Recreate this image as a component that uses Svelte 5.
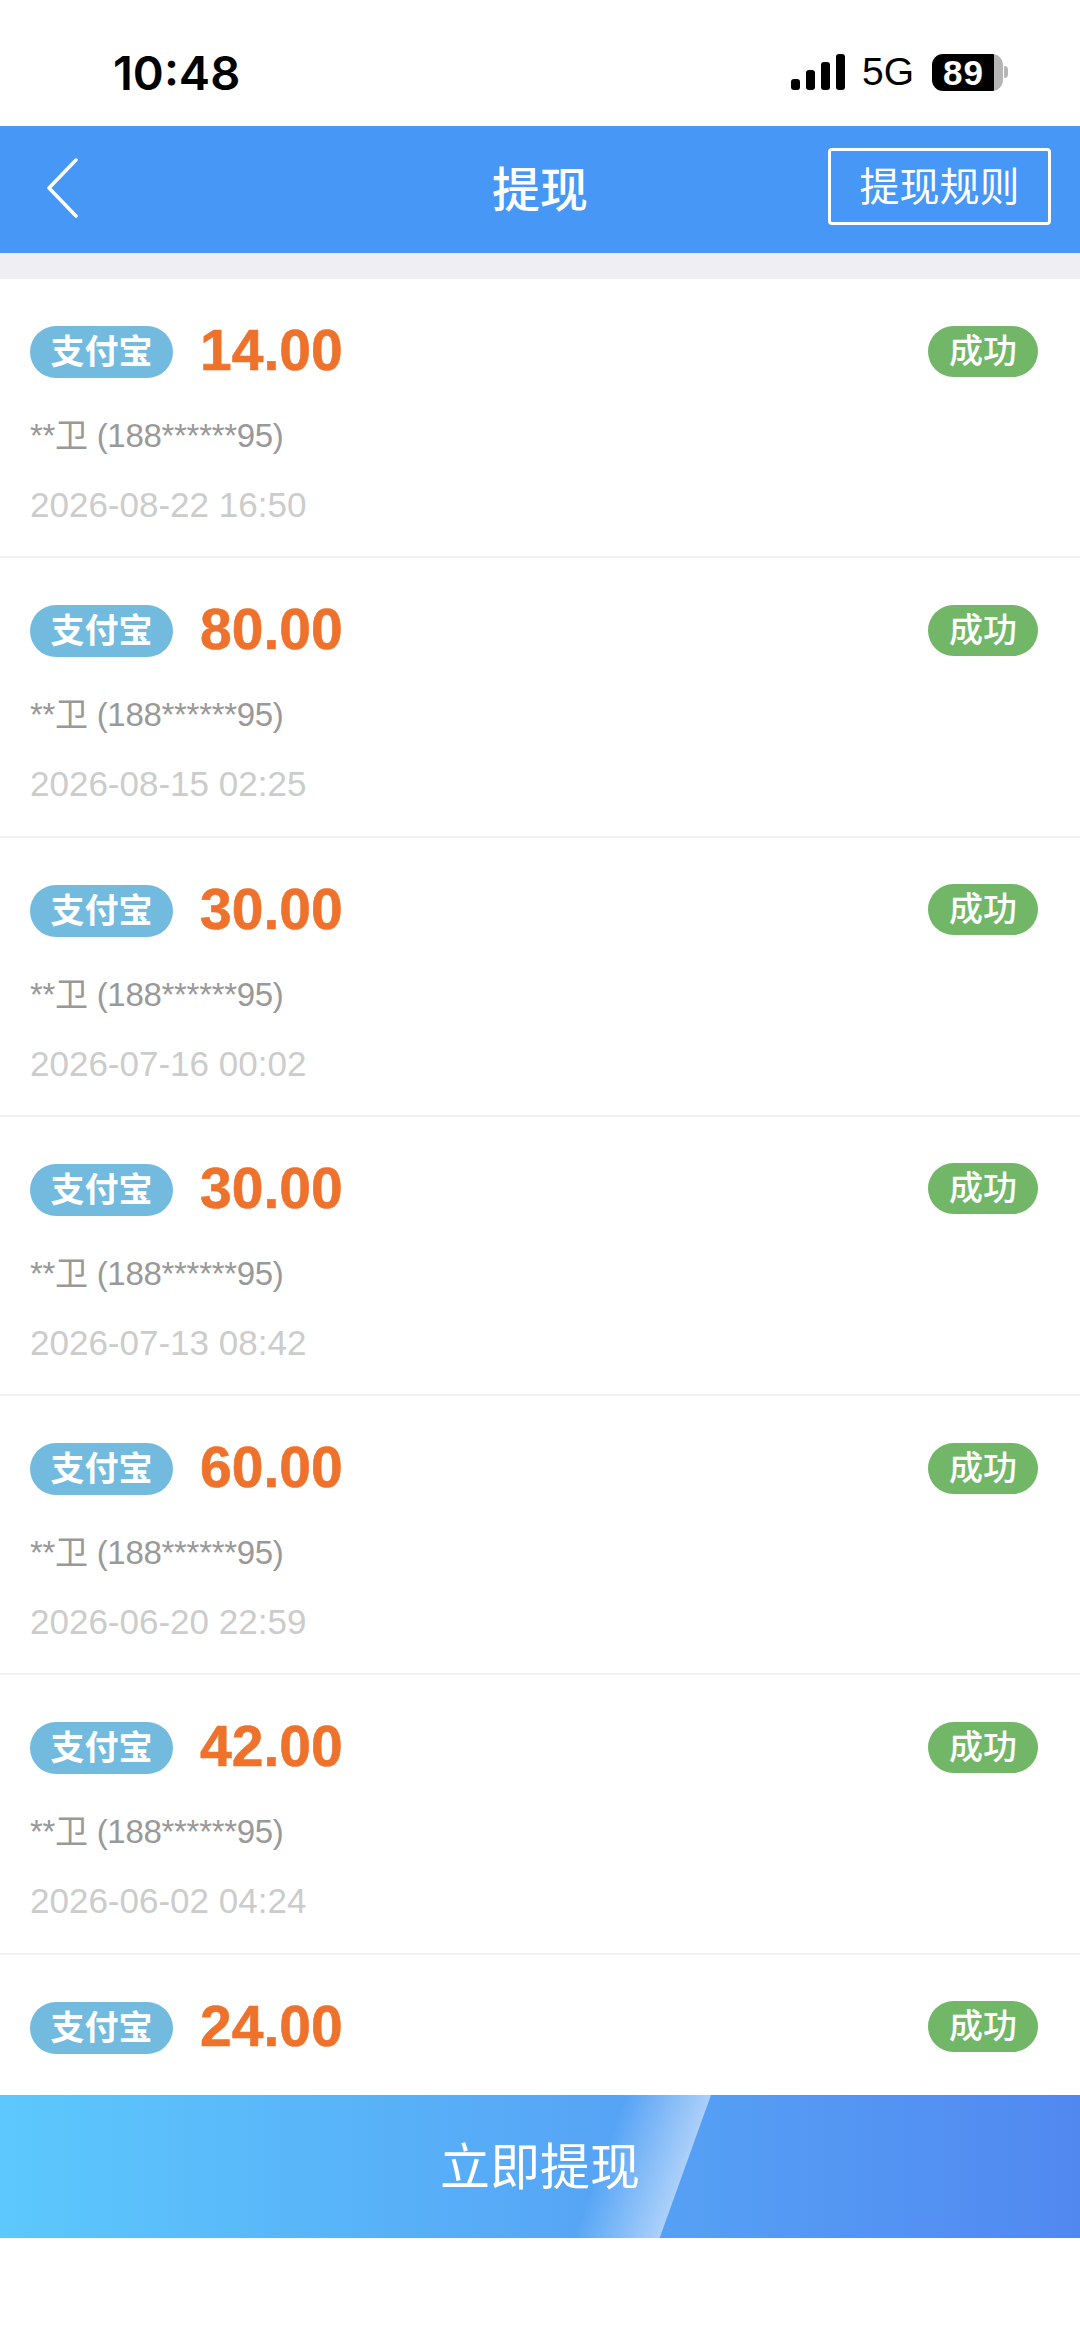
<script>
    const records = [
        { amount: "14.00", time: "2026-08-22 16:50" },
        { amount: "80.00", time: "2026-08-15 02:25" },
        { amount: "30.00", time: "2026-07-16 00:02" },
        { amount: "30.00", time: "2026-07-13 08:42" },
        { amount: "60.00", time: "2026-06-20 22:59" },
        { amount: "42.00", time: "2026-06-02 04:24" },
        { amount: "24.00", time: "" }
    ];
</script>

<div class="page">
    <div class="statusbar">
        <span class="clock">10:48</span>
        <div class="status-right">
            <svg class="signal" width="54" height="36" viewBox="0 0 54 36">
                <rect x="0" y="25" width="9" height="11" rx="3" />
                <rect x="15" y="16" width="9" height="20" rx="3" />
                <rect x="30" y="8" width="9" height="28" rx="3" />
                <rect x="45" y="0" width="9" height="36" rx="3" />
            </svg>
            <span class="net">5G</span>
            <div class="battery"><span>89</span></div>
            <div class="nub"></div>
        </div>
    </div>

    <div class="header">
        <svg class="back" width="34" height="60" viewBox="0 0 34 60">
            <path d="M29 2 L2 30 L29 58" fill="none" stroke="#fff" stroke-width="3.5" stroke-linecap="round" stroke-linejoin="round" />
        </svg>
        <h1>提现</h1>
        <div class="rules">提现规则</div>
    </div>

    <div class="gap"></div>

    <div class="list">
        {#each records as r}
            <div class="row">
                <div class="top">
                    <span class="tag">支付宝</span>
                    <span class="amount">{r.amount}</span>
                    <span class="status">成功</span>
                </div>
                {#if r.time}
                    <div class="name">**卫 (188******95)</div>
                    <div class="time">{r.time}</div>
                {/if}
            </div>
        {/each}
    </div>

    <div class="submit">
        <div class="shine"></div>
        <span>立即提现</span>
    </div>
</div>

<style>
    :global(body) {
        margin: 0;
        background: #fff;
    }

    .page {
        width: 1080px;
        height: 2337px;
        overflow: hidden;
        font-family: "Liberation Sans", "Noto Sans CJK SC", sans-serif;
        background: #fff;
    }

    .statusbar {
        height: 126px;
        box-sizing: border-box;
        padding: 18px 72px 0 113px;
        display: flex;
        justify-content: space-between;
        align-items: center;
    }

    .clock {
        font-family: Inter, sans-serif;
        font-size: 47px;
        font-weight: 600;
        color: #000;
    }

    .status-right {
        display: flex;
        align-items: center;
    }

    .signal {
        fill: #000;
        margin-right: 17px;
    }

    .net {
        font-size: 39px;
        color: #000;
        margin-right: 18px;
    }

    .battery {
        width: 71px;
        height: 37px;
        box-sizing: border-box;
        border-radius: 11px;
        background: linear-gradient(90deg, #000 88%, #b5b5b5 88%);
        color: #fff;
        font-size: 35px;
        font-weight: 700;
        letter-spacing: 1px;
        line-height: 37px;
        padding-left: 11px;
    }

    .nub {
        width: 4px;
        height: 12px;
        margin-left: 1px;
        background: #b5b5b5;
        border-radius: 0 6px 6px 0;
    }

    .header {
        height: 127px;
        background: #4697f6;
        position: relative;
        display: flex;
        align-items: center;
        justify-content: space-between;
        padding: 0 29px 0 47px;
    }

    .back {
        display: block;
        margin-top: -3px;
    }

    h1 {
        position: absolute;
        left: 0;
        right: 0;
        top: 25px;
        margin: 0;
        text-align: center;
        font-size: 48px;
        font-weight: 500;
        color: #fff;
    }

    .rules {
        width: 223px;
        height: 77px;
        box-sizing: border-box;
        border: 3px solid #fff;
        border-radius: 4px;
        color: #fff;
        font-size: 40px;
        line-height: 72px;
        text-align: center;
        margin-top: -6px;
    }

    .gap {
        height: 26px;
        background: #eeeef3;
    }

    .list {
        height: 1816px;
        overflow: hidden;
    }

    .row {
        height: 279.3px;
        box-sizing: border-box;
        padding: 44px 30px 0;
        border-bottom: 2px solid #f1f1f3;
    }

    .top {
        display: flex;
        align-items: center;
        height: 56px;
    }

    .tag {
        width: 143px;
        height: 52px;
        margin-top: 2px;
        border-radius: 26px;
        background: #72bbde;
        color: #fff;
        font-size: 34px;
        font-weight: 700;
        line-height: 52px;
        text-align: center;
    }

    .amount {
        margin-left: 27px;
        margin-top: -2px;
        font-size: 57px;
        font-weight: 700;
        -webkit-text-stroke: 0.6px #ee722b;
        color: #ee722b;
    }

    .status {
        margin-left: auto;
        margin-right: 12px;
        width: 110px;
        height: 51px;
        border-radius: 26px;
        background: #72b668;
        color: #fff;
        font-size: 34px;
        font-weight: 500;
        line-height: 50px;
        text-align: center;
    }

    .name {
        margin-top: 35px;
        font-size: 33px;
        letter-spacing: -0.3px;
        line-height: 44px;
        color: #999;
    }

    .time {
        margin-top: 25px;
        font-size: 35px;
        line-height: 44px;
        color: #ccc;
    }

    .submit {
        height: 143px;
        box-sizing: border-box;
        padding-bottom: 7px;
        position: relative;
        background: linear-gradient(90deg, #5cc8fc, #5188f0);
        display: flex;
        align-items: center;
        justify-content: center;
        color: #fff;
        font-size: 50px;
    }

    .submit span {
        position: relative;
    }

    .shine {
        position: absolute;
        top: 0;
        bottom: 0;
        left: 560px;
        width: 151px;
        background: linear-gradient(110deg, rgba(255, 255, 255, 0) 32%, rgba(255, 255, 255, 0.5) 74%);
        clip-path: polygon(0 0, 100% 0, 66% 100%, 0 100%);
    }
</style>
